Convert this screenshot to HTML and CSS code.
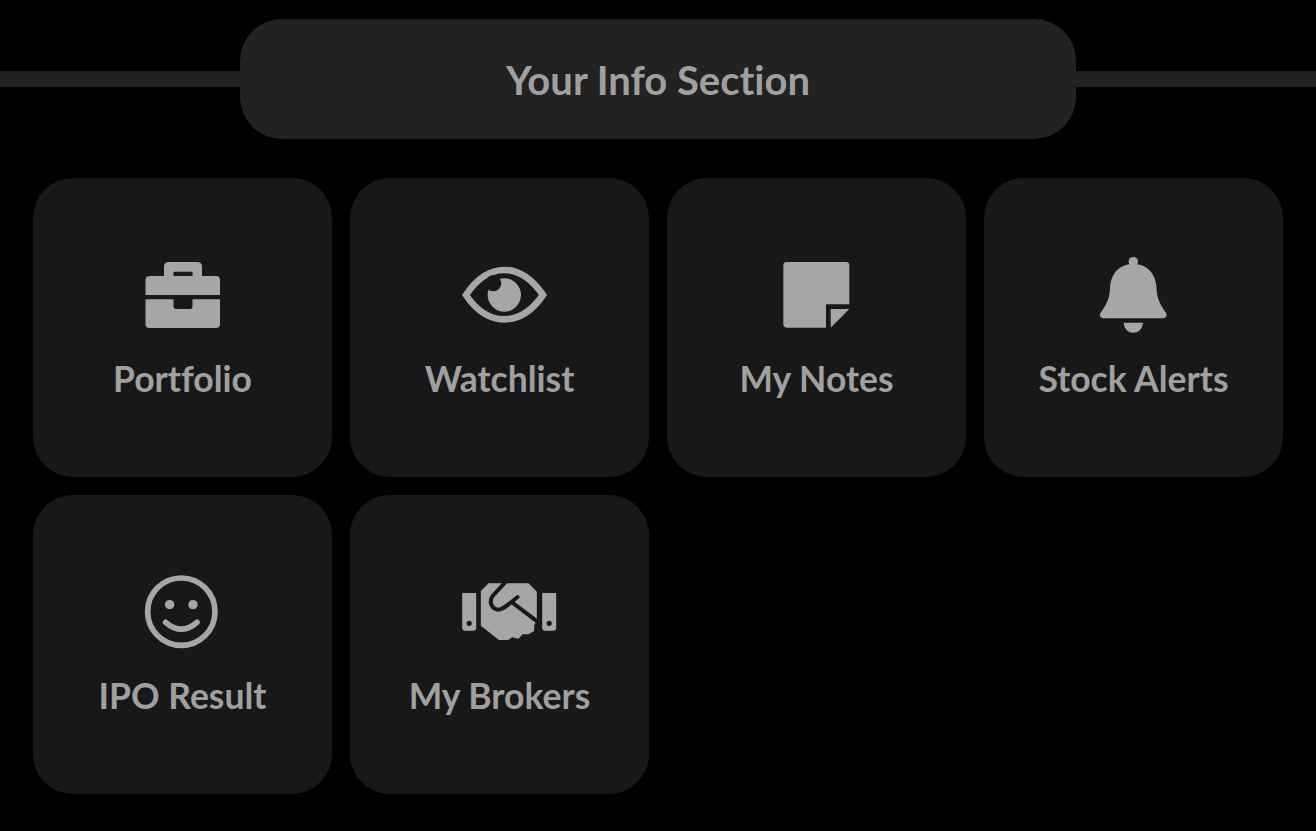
FILE: index.html
```html
<!DOCTYPE html>
<html lang="en">
<head>
    <meta charset="UTF-8">
    <meta name="viewport" content="width=device-width, initial-scale=1.0">
    <title>Your Info Section</title>
    <link rel="stylesheet" href="styles.css">
</head>
<body>

    <div class="section-head">
        <div class="head-line"></div>
        <h1 class="head-title">Your Info Section</h1>
        <div class="head-line"></div>
    </div>

    <div class="card-grid">
        <div class="card">
            <svg class="card-icon" viewBox="0 0 120 96">
                <path fill-rule="evenodd" d="M27 29H41V20Q41 15 46 15H74Q79 15 79 20V29H93Q97 29 97 33V48H22.500V33Q22.500 29 27 29ZM50.500 24.700V29H69.500V24.700ZM22.500 52.300H50.500V59Q50.500 62 53 62H67Q69.500 62 69.500 59V52.300H97V77Q97 81 93 81H26.500Q22.500 81 22.500 77Z"/>
            </svg>
            <div class="card-label">Portfolio</div>
        </div>
        <div class="card">
            <svg class="card-icon" viewBox="0 0 120 96">
                <g transform="translate(-340 -7) scale(.3333)">
                    <path class="eye-line" d="M1098 165C1130 117 1170 90 1213 90C1256 90 1296 117 1329 165C1296 213 1256 238 1213 238C1170 238 1130 213 1098 165Z"/>
                    <circle cx="1213" cy="165" r="50"/>
                    <circle class="eye-bite" cx="1180" cy="130" r="24"/>
                </g>
            </svg>
            <div class="card-label">Watchlist</div>
        </div>
        <div class="card">
            <svg class="card-icon" viewBox="0 0 120 96">
                <g transform="translate(-17 -7) scale(.3333)">
                    <path d="M140 66H318Q328 66 328 76V193H258V263H140Q130 263 130 253V76Q130 66 140 66Z"/>
                    <path d="M272 207H328L272 263Z"/>
                </g>
            </svg>
            <div class="card-label">My Notes</div>
        </div>
        <div class="card">
            <svg class="card-icon" viewBox="0 0 120 96">
                <g transform="translate(-334 -7) scale(.3333)">
                    <circle cx="1180" cy="65" r="14"/>
                    <path d="M1180 72C1135 72 1110 105 1110 150C1108 180 1095 200 1083 217C1076 228 1082 235 1092 235H1268C1278 235 1284 228 1277 217C1265 200 1252 180 1250 150C1250 105 1225 72 1180 72Z"/>
                    <path d="M1151 248H1209C1207 268 1195 278 1180 278C1165 278 1153 268 1151 248Z"/>
                </g>
            </svg>
            <div class="card-label">Stock Alerts</div>
        </div>
        <div class="card">
            <svg class="card-icon" viewBox="0 0 120 96">
                <g transform="translate(-33 -4) scale(.3333)">
                    <circle class="smile-line" cx="274" cy="155" r="101"/>
                    <circle cx="239" cy="134" r="14"/>
                    <circle cx="309" cy="134" r="14"/>
                    <path class="smile-line round-cap" d="M227 187Q274 228 321 187"/>
                </g>
            </svg>
            <div class="card-label">IPO Result</div>
        </div>
        <div class="card">
            <svg class="card-icon" viewBox="0 0 120 96">
                <g transform="translate(10.200 11) scale(.3333)">
                    <path fill-rule="evenodd" d="M36 54H78V160Q78 167 71 167H43Q36 167 36 160ZM57 137a8 8 0 1 0 .01 0Z"/>
                    <path fill-rule="evenodd" d="M276 54H318V160Q318 167 311 167H283Q276 167 276 160ZM297 137a8 8 0 1 0 .01 0Z"/>
                    <path d="M92 48L115 25H235L260 50V137L252 150V168L235 178H217L205 191L186 187L174 195H146L92 152Z"/>
                    <path class="grip-line" d="M165 22L128 62C116 78 122 100 142 104C158 106 172 90 202 66"/>
                    <path class="grip-line" d="M188 84L262 140"/>
                </g>
            </svg>
            <div class="card-label">My Brokers</div>
        </div>
    </div>

</body>
</html>
```

FILE: styles.css
```css
body {
    margin: 0;
    padding: 19px 0 0;
    background-color: #000;
    font-family: Lato, "Noto Sans", sans-serif;
    font-variant-ligatures: none;
    color: #a0a0a0;
}
.section-head {
    display: flex;
    align-items: center;
}
.head-line {
    flex: 1;
    height: 16px;
    background-color: #222;
}
.head-title {
    box-sizing: border-box;
    width: 836px;
    height: 120px;
    margin: 0;
    padding-top: 2px;
    border-radius: 42px;
    background-color: #222;
    display: flex;
    align-items: center;
    justify-content: center;
    font-size: 40px;
    font-weight: 700;
}
.card-grid {
    display: grid;
    grid-template-columns: repeat(4, 1fr);
    grid-auto-rows: 299px;
    column-gap: 18px;
    row-gap: 18px;
    margin-top: 39px;
    padding: 0 33px;
}
.card {
    display: flex;
    flex-direction: column;
    align-items: center;
    padding-top: 69px;
    border-radius: 40px;
    background-color: #181818;
}
.card-icon {
    width: 120px;
    height: 96px;
    fill: #a6a6a6;
}
.card-label {
    margin-top: 14px;
    font-size: 35.500px;
    font-weight: 700;
    line-height: 44px;
}
.eye-line, .smile-line {
    fill: none;
    stroke: #a6a6a6;
    stroke-width: 17;
}
.eye-line {
    stroke-width: 20;
}
.round-cap {
    stroke-linecap: round;
}
.eye-bite {
    fill: #181818;
}
.grip-line {
    fill: none;
    stroke: #181818;
    stroke-width: 12;
    stroke-linecap: round;
}
```
